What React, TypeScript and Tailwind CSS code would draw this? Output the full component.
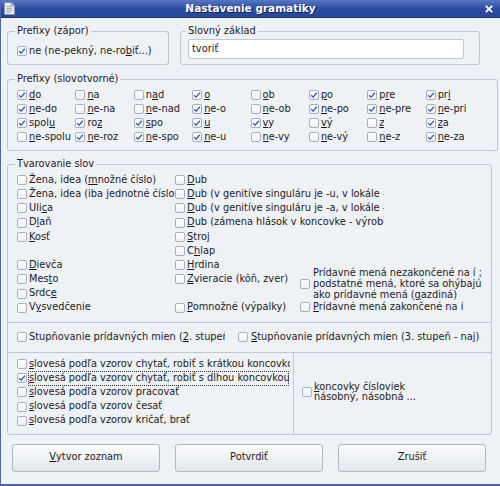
import type { ReactNode } from "react";

function cn(...c: (string | false | undefined)[]) {
  return c.filter(Boolean).join(" ");
}

// "&" marks the mnemonic letter, drawn underlined
function Mn({ t }: { t: string }) {
  const i = t.indexOf("&");
  if (i < 0) return <>{t}</>;
  return (
    <>
      {t.slice(0, i)}
      <span className="underline decoration-[1px] underline-offset-[1px]">{t[i + 1]}</span>
      {t.slice(i + 2)}
    </>
  );
}

function Box({ checked }: { checked?: boolean }) {
  return (
    <span className="flex h-[10px] w-[10px] shrink-0 items-center justify-center rounded-[2px] border border-[#a9b0bc] bg-gradient-to-b from-white to-[#eef0f4]">
      {checked ? (
        <svg viewBox="0 0 10 10" className="h-[8px] w-[8px]">
          <path d="M1.4 5.3 L3.9 7.6 L8.6 2.2" fill="none" stroke="#2b58b5" strokeWidth="1.5" />
        </svg>
      ) : null}
    </span>
  );
}

function Check({
  label,
  checked,
  className,
  textClass,
}: {
  label: string;
  checked?: boolean;
  className?: string;
  textClass?: string;
}) {
  return (
    <div className={cn("flex h-[14.2px] items-center gap-[2px]", className)}>
      <Box checked={checked} />
      <span className={cn("overflow-hidden whitespace-nowrap", textClass)}>
        <Mn t={label} />
      </span>
    </div>
  );
}

function Frame({
  title,
  className,
  children,
}: {
  title: string;
  className?: string;
  children: ReactNode;
}) {
  return (
    <fieldset className={cn("min-w-0 rounded-[3px] border border-[#c2c7cf] px-[9px]", className)}>
      <legend className="-ml-[2px] px-[2px] leading-[12px]">{title}</legend>
      {children}
    </fieldset>
  );
}

const prefixes: [string, boolean][] = [
  ["&do", true], ["&na", false], ["n&ad", false], ["&o", true], ["&ob", false], ["&po", true], ["p&re", true], ["pr&i", true],
  ["&ne-do", true], ["&ne-na", false], ["&ne-nad", false], ["&ne-o", true], ["&ne-ob", false], ["&ne-po", true], ["&ne-pre", true], ["&ne-pri", true],
  ["spol&u", true], ["ro&z", true], ["&spo", true], ["&u", true], ["&vy", true], ["&vý", false], ["&z", false], ["&za", true],
  ["&ne-spolu", false], ["&ne-roz", true], ["&ne-spo", true], ["&ne-u", true], ["&ne-vy", false], ["&ne-vý", false], ["&ne-z", false], ["&ne-za", true],
];

const col1 = [
  "Žena, idea (&množné číslo)",
  "Žena, idea (iba &jednotné číslo)",
  "Uli&ca",
  "D&laň",
  "&Kosť",
  "",
  "&Dievča",
  "Mes&to",
  "Srdc&e",
  "V&ysvedčenie",
];

const col2 = [
  "&Dub",
  "&Dub (v genitíve singuláru je -u, v lokále -e)",
  "&Dub (v genitíve singuláru je -a, v lokále -e)",
  "&Dub (zámena hlások v koncovke - výrobok)",
  "&Stroj",
  "C&hlap",
  "&Hrdina",
  "&Zvieracie (kôň, zver)",
  "",
  "&Pomnožné (výpalky)",
];

const verbs = [
  "&slovesá podľa vzorov chytať, robiť s krátkou koncovkou",
  "&slovesá podľa vzorov chytať, robiť s dlhou koncovkou",
  "&slovesá podľa vzorov pracovať",
  "&slovesá podľa vzorov česať",
  "&slovesá podľa vzorov kričať, brať",
];

function Button({ label }: { label: string }) {
  return (
    <button
      type="button"
      className="flex h-[28px] w-[148px] items-center justify-center rounded-[3px] border border-[#b1b7c1] bg-gradient-to-b from-[#fbfcfd] to-[#e2e6ec] text-[#1c1c1c]"
    >
      <Mn t={label} />
    </button>
  );
}

export default function App() {
  return (
    <div
      className="flex h-[486px] w-[500px] flex-col overflow-hidden border-b-2 border-l border-[#4d67a8] bg-[#eef1f6] text-[9.8px] text-[#1c1c1c]"
      style={{ fontFamily: '"DejaVu Sans", "Liberation Sans", sans-serif' }}
    >
      {/* title bar */}
      <div className="relative flex h-[18px] shrink-0 items-center justify-center border-b border-[#1d3577] bg-gradient-to-b from-[#5876c2] via-[#2d4ea0] to-[#25469a]">
        <svg viewBox="0 0 12 14" className="absolute left-[3px] top-[2px] h-[13px] w-[11px]">
          <path d="M0.5 0.5 H8 L11.5 4 V13.5 H0.5 Z" fill="#e9ecf1" stroke="#8d96a5" />
          <path d="M2.5 5 H9 M2.5 7 H9 M2.5 9 H9 M2.5 11 H7" stroke="#9aa3b1" strokeWidth="1" />
          <path d="M8 0.5 V4 H11.5" fill="#cfd5de" stroke="#8d96a5" />
        </svg>
        <span className="text-[10.5px] font-bold text-white [text-shadow:1px_1px_0_#0f2257]">Nastavenie gramatiky</span>
        <svg viewBox="0 0 10 10" className="absolute right-[7px] top-[5px] h-[8px] w-[8px]">
          <path d="M1 1 L9 9 M9 1 L1 9" stroke="white" strokeWidth="2.2" />
        </svg>
      </div>

      <div className="flex flex-col pl-[6px]">
        {/* top row */}
        <div className="mt-[7px] flex gap-[11px]">
          <Frame title="Prefixy (zápor)" className="w-[162px] pb-[5px]">
            <Check className="mt-[7px] h-[14px]" label="ne (ne-pekný, ne-ro&biť...)" checked />
          </Frame>
          <Frame title="Slovný základ" className="w-[300px] pb-[5px] pl-[7px]">
            <div className="mt-[2px] flex h-[20px] w-[276px] items-center rounded-[2px] border border-[#c2c7cf] bg-white px-[3px]">
              tvoriť
            </div>
          </Frame>
        </div>

        {/* slovotvorné */}
        <Frame title="Prefixy (slovotvorné)" className="mt-[8px] w-[491px] pb-[6px]">
          <div className="mt-[3px] grid w-[467px] grid-cols-8">
            {prefixes.map(([l, c]) => (
              <Check key={l} label={l} checked={c} className="h-[14px]" />
            ))}
          </div>
        </Frame>

        {/* tvarovanie */}
        <Frame title="Tvarovanie slov" className="mt-[7px] w-[485px] pb-[6px]">
          <div className="mt-[3px] flex">
            <div className="flex w-[163px] flex-col">
              {col1.map((l, i) =>
                l ? <Check key={i} label={l} textClass="max-w-[146px]" /> : <div key={i} className="h-[14.2px]" />
              )}
            </div>
            <div className="flex w-[124px] flex-col">
              {col2.map((l, i) =>
                l ? (
                  <Check key={i} label={l} textClass="max-w-[197px] shrink-0" className="w-[210px]" />
                ) : (
                  <div key={i} className="h-[14.2px]" />
                )
              )}
            </div>
            <div className="flex flex-col pl-[1px] pt-[94px]">
              <div className="flex items-center gap-[3px]">
                <Box />
                <span className="whitespace-nowrap leading-[11px]">
                  Prídavné mená nezakončené na í ;
                  <br />
                  podstatné mená, ktoré sa ohýbajú
                  <br />
                  ako prídavné mená (<Mn t="&gazdiná" />)
                </span>
              </div>
              <Check label="&Prídavné mená zakončené na í" className="gap-[3px]" />
            </div>
          </div>

          <div className="-mx-[9px] mt-[7px] h-px bg-[#c2c7cf]" />
          <div className="mt-[7px] flex h-[14px]">
            <Check className="h-[14px] w-[221px]" label="Stupňovanie prídavných mien (&2. stupeň)" textClass="max-w-[196px]" />
            <Check className="h-[14px] gap-[3px]" label="&Stupňovanie prídavných mien (3. stupeň - naj)" />
          </div>
          <div className="-mx-[9px] mt-[8px] h-px bg-[#c2c7cf]" />

          <div className="flex pt-[4px]">
            <div className="flex w-[276px] flex-col">
              {verbs.map((l, i) => (
                <Check
                  key={i}
                  label={l}
                  checked={i === 1}
                  textClass={cn("max-w-[261px]", i === 1 && "outline outline-1 outline-dotted outline-[#333] -outline-offset-1 px-[1px] -ml-[1px]")}
                />
              ))}
            </div>
            <div className="-mb-[6px] -mt-[4px] w-px bg-[#c2c7cf]" />
            <div className="ml-[8px] flex items-center gap-[2px]">
              <Box />
              <span className="whitespace-nowrap leading-[10.5px]">
                <Mn t="&koncovky čísloviek" />
                <br />
                násobný, násobná ...
              </span>
            </div>
          </div>
        </Frame>

        {/* buttons */}
        <div className="mt-[9px] flex w-[486px] justify-between pl-[5px] pr-[7px]">
          <Button label="&Vytvor zoznam" />
          <Button label="Potvrdiť" />
          <Button label="Zrušiť" />
        </div>
      </div>
    </div>
  );
}
